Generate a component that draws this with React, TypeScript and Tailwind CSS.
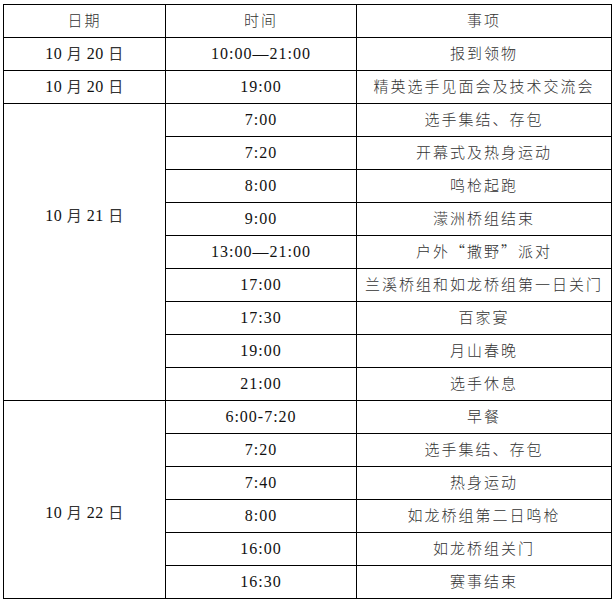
const font = { fontFamily: '"Liberation Serif", "Noto Sans CJK SC", serif' };
const cjk = { fontFamily: '"Noto Sans CJK SC", "Liberation Serif", sans-serif' };

type Row = { time: string; item: string };

const day21: Row[] = [
  { time: "7:00", item: "选手集结、存包" },
  { time: "7:20", item: "开幕式及热身运动" },
  { time: "8:00", item: "鸣枪起跑" },
  { time: "9:00", item: "濛洲桥组结束" },
  { time: "13:00—21:00", item: "户外“撒野”派对" },
  { time: "17:00", item: "兰溪桥组和如龙桥组第一日关门" },
  { time: "17:30", item: "百家宴" },
  { time: "19:00", item: "月山春晚" },
  { time: "21:00", item: "选手休息" },
];

const day22: Row[] = [
  { time: "6:00-7:20", item: "早餐" },
  { time: "7:20", item: "选手集结、存包" },
  { time: "7:40", item: "热身运动" },
  { time: "8:00", item: "如龙桥组第二日鸣枪" },
  { time: "16:00", item: "如龙桥组关门" },
  { time: "16:30", item: "赛事结束" },
];

const cell = "border border-black text-center align-middle p-0";

function DateText({ m, d }: { m: string; d: string }) {
  return (
    <span className="text-[16px] text-[#111] tracking-[0.5px]">
      {m} <span className="text-[15px] text-[#333]">月</span> {d}{" "}
      <span className="text-[15px] text-[#333]">日</span>
    </span>
  );
}

function Time({ t }: { t: string }) {
  return <span className="text-[16px] text-[#111] tracking-[1px]">{t}</span>;
}

function Item({ s }: { s: string }) {
  return (
    <span className="text-[15px] text-[#333] tracking-[2px] font-light" style={cjk}>
      {s}
    </span>
  );
}

function Group({ m, d, rows }: { m: string; d: string; rows: Row[] }) {
  return (
    <>
      {rows.map((r, i) => (
        <tr key={i} className="h-[33px]">
          {i === 0 && (
            <td rowSpan={rows.length} className="border border-black text-center align-top p-0 pt-[100px]">
              <DateText m={m} d={d} />
            </td>
          )}
          <td className={cell}>
            <Time t={r.time} />
          </td>
          <td className={cell}>
            <Item s={r.item} />
          </td>
        </tr>
      ))}
    </>
  );
}

export default function App() {
  return (
    <div className="w-[615px] h-[603px] bg-white pt-[4px] pl-[3px]" style={font}>
      <table className="border-collapse table-fixed w-[608px]">
        <colgroup>
          <col className="w-[162px]" />
          <col className="w-[191px]" />
          <col className="w-[255px]" />
        </colgroup>
        <tbody>
          <tr className="h-[33px]">
            <td className={cell}>
              <Item s="日期" />
            </td>
            <td className={cell}>
              <Item s="时间" />
            </td>
            <td className={cell}>
              <Item s="事项" />
            </td>
          </tr>
          <tr className="h-[33px]">
            <td className={cell}>
              <DateText m="10" d="20" />
            </td>
            <td className={cell}>
              <Time t="10:00—21:00" />
            </td>
            <td className={cell}>
              <Item s="报到领物" />
            </td>
          </tr>
          <tr className="h-[33px]">
            <td className={cell}>
              <DateText m="10" d="20" />
            </td>
            <td className={cell}>
              <Time t="19:00" />
            </td>
            <td className={cell}>
              <Item s="精英选手见面会及技术交流会" />
            </td>
          </tr>
          <Group m="10" d="21" rows={day21} />
          <Group m="10" d="22" rows={day22} />
        </tbody>
      </table>
    </div>
  );
}
